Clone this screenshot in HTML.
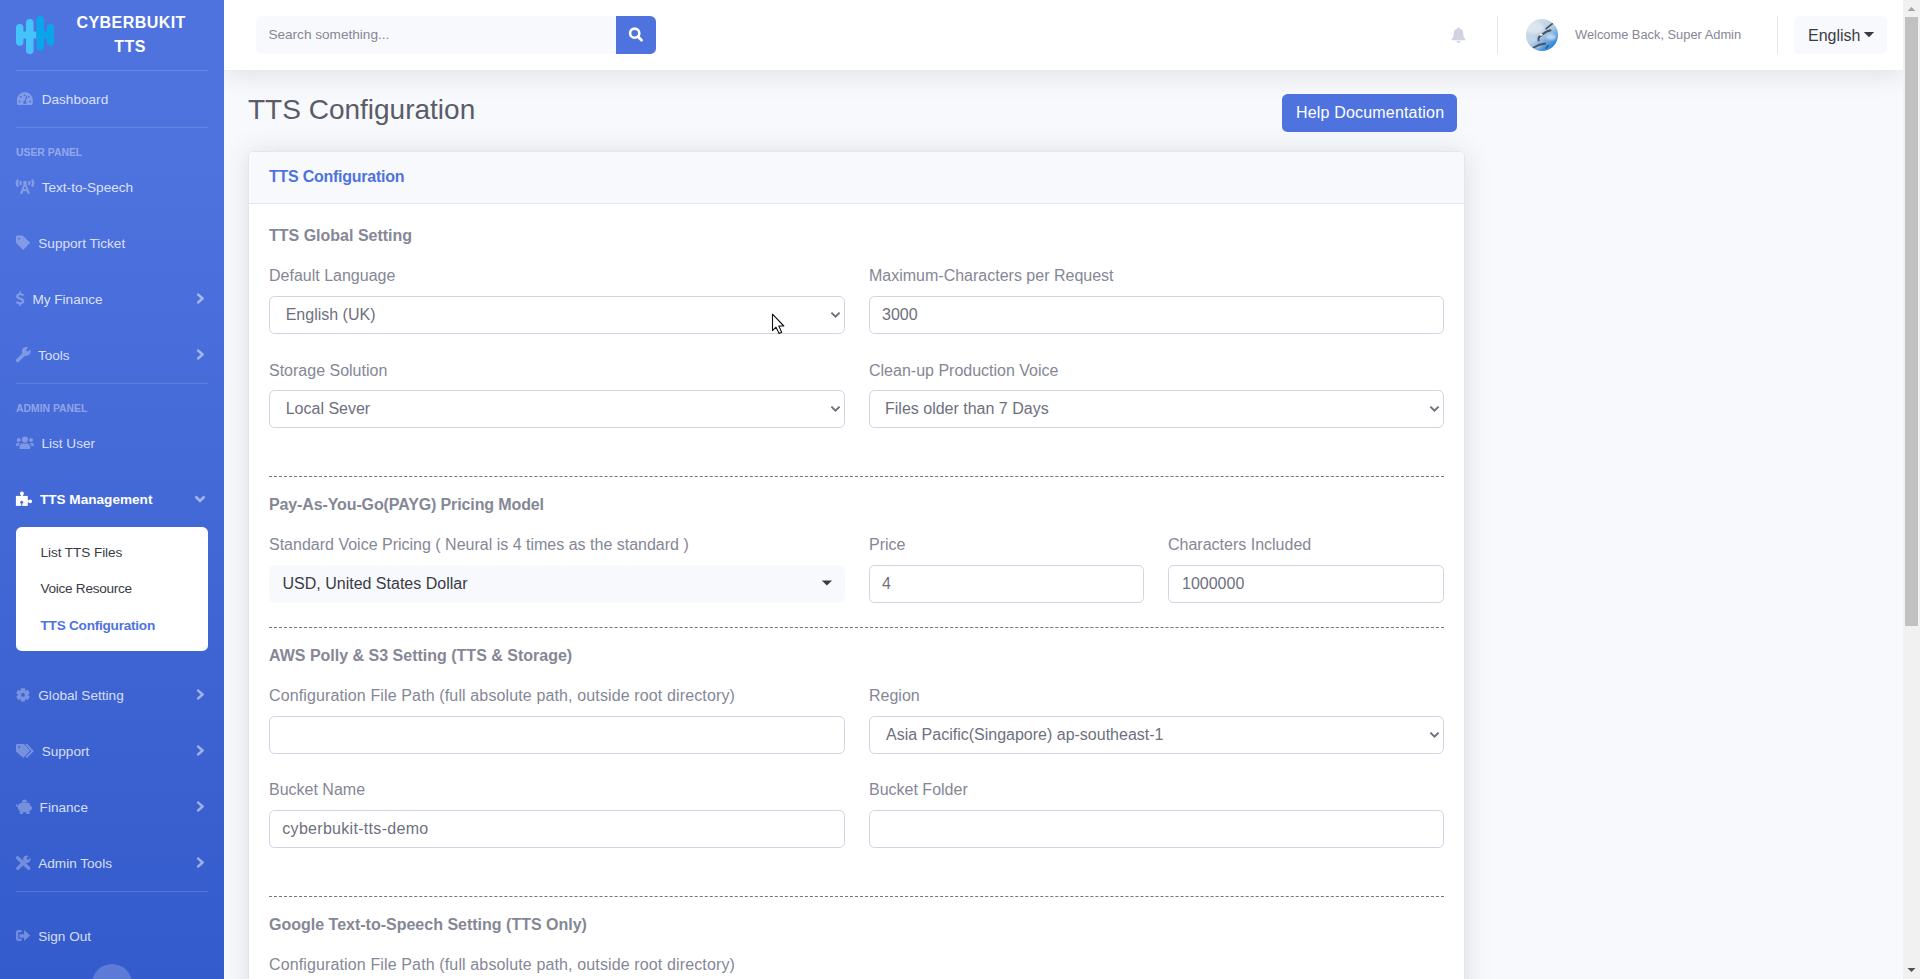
<!DOCTYPE html>
<html>
<head>
<meta charset="utf-8">
<style>
html,body{margin:0;padding:0;width:1920px;height:979px;overflow:hidden;background:#f8f9fc;font-family:"Liberation Sans",sans-serif;}
.a{position:absolute;white-space:nowrap;line-height:20px;}
#sb{position:absolute;z-index:5;left:0;top:0;width:224px;height:979px;overflow:hidden;background:#4e73df;background-image:linear-gradient(180deg,#4e73df 10%,#224abe 100%);background-size:224px 1560px;background-repeat:no-repeat;}
.hr{position:absolute;left:16px;width:192px;height:1px;background:rgba(255,255,255,.15);}
.nl{font-size:13.6px;color:rgba(255,255,255,.8);}
.sh{font-size:10.4px;font-weight:700;color:rgba(255,255,255,.4);letter-spacing:0;}
.ic{position:absolute;fill:rgba(255,255,255,.3);}
.chev{position:absolute;left:196px;width:9px;height:11px;}
#tb{position:absolute;left:224px;top:0;width:1679px;height:70px;background:#fff;box-shadow:0 .15rem 1.75rem 0 rgba(58,59,69,.15);}
.lbl{font-size:16px;color:#858796;}
.sec{font-size:16px;font-weight:700;color:#858796;}
.fc{position:absolute;box-sizing:border-box;height:38px;border:1px solid #d1d3e2;border-radius:5.6px;background:#fff;}
.val{font-size:16px;color:#6e707e;}
.dash{position:absolute;left:269px;width:1175px;height:0;border-top:1px dashed #777;}
.sel svg{position:absolute;right:5px;top:15px;}
</style>
</head>
<body>
<!-- SIDEBAR -->
<div id="sb">
<svg style="position:absolute;left:16px;top:16px" width="40" height="40" viewBox="0 0 40 40">
<g fill="#45c4fb"><rect x="0" y="8" width="7.4" height="21.8" rx="3.7"/><rect x="10" y="3" width="7.6" height="35" rx="3.8"/><rect x="6" y="15.5" width="6" height="7"/><rect x="16" y="15.5" width="4.5" height="7"/></g>
<g fill="#0aa5ea"><rect x="20.4" y="0" width="7.6" height="34.7" rx="3.8"/><rect x="30.7" y="8" width="7.4" height="21.8" rx="3.7"/><rect x="20.4" y="15.5" width="0" height="7"/><rect x="27" y="15.5" width="5" height="7"/></g>
</svg>
<div class="a " style="left:76.4px;top:13.45px;font-size:16px;font-weight:700;color:#fff;letter-spacing:0.45px">CYBERBUKIT</div>
<div class="a " style="left:114.3px;top:37.15px;font-size:16px;font-weight:700;color:#fff;letter-spacing:0.45px">TTS</div>
<div class="hr" style="top:70px"></div>
<div class="hr" style="top:127px"></div>
<div class="hr" style="top:383px"></div>
<div class="hr" style="top:891px"></div>
<div class="a nl" style="left:41.7px;top:90.28px;font-size:13.6px;">Dashboard</div>
<div class="a nl" style="left:41.7px;top:178.28px;font-size:13.6px;">Text-to-Speech</div>
<div class="a nl" style="left:38.3px;top:234.28px;font-size:13.6px;">Support Ticket</div>
<div class="a nl" style="left:32.4px;top:290.48px;font-size:13.6px;">My Finance</div>
<div class="a nl" style="left:37.9px;top:346.28px;font-size:13.6px;">Tools</div>
<div class="a nl" style="left:41.4px;top:434.28px;font-size:13.6px;">List User</div>
<div class="a nl" style="left:39.9px;top:490.28px;font-size:13.6px;font-weight:700;color:#fff">TTS Management</div>
<div class="a nl" style="left:38.3px;top:686.28px;font-size:13.6px;">Global Setting</div>
<div class="a nl" style="left:41.7px;top:742.28px;font-size:13.6px;">Support</div>
<div class="a nl" style="left:39.6px;top:798.28px;font-size:13.6px;">Finance</div>
<div class="a nl" style="left:38.2px;top:854.28px;font-size:13.6px;">Admin Tools</div>
<div class="a nl" style="left:38.2px;top:927.48px;font-size:13.6px;">Sign Out</div>
<div class="a sh" style="left:16px;top:142.69px;font-size:10.4px;">USER PANEL</div>
<div class="a sh" style="left:16px;top:398.99px;font-size:10.4px;">ADMIN PANEL</div>
<div style="position:absolute;left:16px;top:527px;width:192px;height:124px;background:#fff;border-radius:5.6px"></div>
<div class="a " style="left:40.5px;top:543.48px;font-size:13.6px;color:#3a3b45;letter-spacing:-0.08px">List TTS Files</div>
<div class="a " style="left:40.5px;top:579.48px;font-size:13.6px;color:#3a3b45;letter-spacing:-0.28px">Voice Resource</div>
<div class="a " style="left:40.5px;top:615.68px;font-size:13.6px;color:#4e73df;font-weight:700;letter-spacing:-0.24px">TTS Configuration</div>
<svg class="chev" style="top:293.0px" viewBox="0 0 9 11"><path d="M2.2 1.6 L6.6 5.5 L2.2 9.4" fill="none" stroke="rgba(255,255,255,.5)" stroke-width="2.6" stroke-linecap="round" stroke-linejoin="round"/></svg>
<svg class="chev" style="top:348.8px" viewBox="0 0 9 11"><path d="M2.2 1.6 L6.6 5.5 L2.2 9.4" fill="none" stroke="rgba(255,255,255,.5)" stroke-width="2.6" stroke-linecap="round" stroke-linejoin="round"/></svg>
<svg class="chev" style="top:688.8px" viewBox="0 0 9 11"><path d="M2.2 1.6 L6.6 5.5 L2.2 9.4" fill="none" stroke="rgba(255,255,255,.5)" stroke-width="2.6" stroke-linecap="round" stroke-linejoin="round"/></svg>
<svg class="chev" style="top:744.8px" viewBox="0 0 9 11"><path d="M2.2 1.6 L6.6 5.5 L2.2 9.4" fill="none" stroke="rgba(255,255,255,.5)" stroke-width="2.6" stroke-linecap="round" stroke-linejoin="round"/></svg>
<svg class="chev" style="top:800.8px" viewBox="0 0 9 11"><path d="M2.2 1.6 L6.6 5.5 L2.2 9.4" fill="none" stroke="rgba(255,255,255,.5)" stroke-width="2.6" stroke-linecap="round" stroke-linejoin="round"/></svg>
<svg class="chev" style="top:856.8px" viewBox="0 0 9 11"><path d="M2.2 1.6 L6.6 5.5 L2.2 9.4" fill="none" stroke="rgba(255,255,255,.5)" stroke-width="2.6" stroke-linecap="round" stroke-linejoin="round"/></svg>
<svg style="position:absolute;left:194px;top:494px" width="12" height="10" viewBox="0 0 12 10"><path d="M1.5 2.5 L6 7 L10.5 2.5" fill="none" stroke="rgba(255,255,255,.5)" stroke-width="2.6"/></svg>
<div style="position:absolute;left:92px;top:964px;width:40px;height:40px;border-radius:50%;background:rgba(255,255,255,.2)"></div>
<svg style="position:absolute;left:0;top:0" width="224" height="979" viewBox="0 0 224 979"><g fill="#fff" stroke="none" opacity=".3">
<path fill-rule="evenodd" d="M17.6,105 C16.6,103 16.9,101 16.9,100.1 A7.95,7.95 0 0 1 32.8,100.1 C32.8,101 33.1,103 32.1,105 Z M19.80,97.10 a1,1 0 1,0 2,0 a1,1 0 1,0 -2,0 M23.50,95.30 a1,1 0 1,0 2,0 a1,1 0 1,0 -2,0 M27.70,97.10 a1,1 0 1,0 2,0 a1,1 0 1,0 -2,0 M18.60,101.50 a1,1 0 1,0 2,0 a1,1 0 1,0 -2,0 M29.20,101.50 a1,1 0 1,0 2,0 a1,1 0 1,0 -2,0 M23.20,102.40 a1.7,1.7 0 1,0 3.4,0 a1.7,1.7 0 1,0 -3.4,0 "/>
<path d="M24.3,102 L26.2,95.6 L27.3,95.9 L25.6,102.4 Z" fill="#4e73df"/>
<g fill="none" stroke="#fff" stroke-width="2.3" stroke-linecap="round"><path d="M17.6,180.4 Q16,183.1 17.6,185.8"/><path d="M32.4,180.4 Q34,183.1 32.4,185.8"/><path d="M20.6,182 Q19.8,183 20.6,184"/><path d="M29.2,182 Q30,183 29.2,184"/></g>
<path d="M25,180.8 C26.2,180.8 26.9,181.6 26.9,182.7 C26.9,183.3 26.7,183.8 26.3,184.1 L30,193.8 L27.6,193.8 L26.8,191.2 L23.2,191.2 L22.4,193.8 L20,193.8 L23.7,184.1 C23.3,183.8 23.1,183.3 23.1,182.7 C23.1,181.6 23.8,180.8 25,180.8 Z M23.8,189.2 L26.2,189.2 L25,185.6 Z"/>
<path fill-rule="evenodd" d="M16,236.8 Q16,235.5 17.3,235.5 L22.6,235.5 L30.1,242.8 L23.2,250 L16,242.8 Z M18.30,238.80 a0.9,0.9 0 1,0 1.8,0 a0.9,0.9 0 1,0 -1.8,0 "/>
<path d="M19.3,291.4 L21,291.4 L21,293.2 C22.3,293.3 23.4,293.8 24.2,294.4 L23.2,296.1 C22.3,295.5 21.3,295.2 20.2,295.2 C19,295.2 18.5,295.6 18.5,296.2 C18.5,296.9 19.3,297.1 20.9,297.7 C23.1,298.4 24.3,299.3 24.3,301.2 C24.3,302.9 23,304 21,304.2 L21,305.9 L19.3,305.9 L19.3,304.2 C17.9,304.1 16.6,303.6 15.9,302.9 L16.9,301.2 C17.8,301.9 19,302.3 20.1,302.3 C21.3,302.3 21.9,301.9 21.9,301.2 C21.9,300.5 21.2,300.2 19.5,299.6 C17.4,298.9 16.1,298.1 16.1,296.3 C16.1,294.6 17.4,293.4 19.3,293.2 Z"/>
<path d="M17.6,360.4 L24.6,353.4" stroke="#fff" stroke-width="3.6" stroke-linecap="round" fill="none"/>
<path d="M26.2,347.1 C27,347.1 27.8,347.3 28.3,347.6 L25.9,350.1 L27.6,351.8 L30.2,349.4 C30.5,350 30.6,350.6 30.6,351.4 C30.6,353.8 28.6,355.8 26.2,355.8 C25.4,355.8 24.6,355.6 24,355.2 L22.6,353.8 C22.2,353.2 21.9,352.4 21.9,351.5 C21.9,349.1 23.8,347.1 26.2,347.1 Z"/>
<path d="M21.80,439.60 a3.1,3.1 0 1,0 6.2,0 a3.1,3.1 0 1,0 -6.2,0 M16.70,440.10 a2,2 0 1,0 4,0 a2,2 0 1,0 -4,0 M29.00,440.10 a2,2 0 1,0 4,0 a2,2 0 1,0 -4,0 "/>
<path d="M19.4,448.9 L19.4,446.6 C19.4,444.8 20.6,443.4 22.3,443.4 L27.3,443.4 C29,443.4 30.2,444.8 30.2,446.6 L30.2,448.9 Z"/>
<path d="M16,446 L16,444.6 C16,443.7 16.6,442.9 17.6,442.9 L20.2,442.9 C19.2,443.8 18.6,444.8 18.5,446 Z M33.8,446 L33.8,444.6 C33.8,443.7 33.2,442.9 32.2,442.9 L29.6,442.9 C30.6,443.8 31.2,444.8 31.3,446 Z"/>
<path fill-rule="evenodd" d="M20.66,690.82 L20.93,688.21 L25.07,688.21 L25.34,690.82 L25.36,690.84 L27.76,689.76 L29.83,693.35 L27.70,694.88 L27.70,694.92 L29.83,696.45 L27.76,700.04 L25.36,698.96 L25.34,698.98 L25.07,701.59 L20.93,701.59 L20.66,698.98 L20.64,698.96 L18.24,700.04 L16.17,696.45 L18.30,694.92 L18.30,694.88 L16.17,693.35 L18.24,689.76 L20.64,690.84 Z M21.10,694.90 a1.9,1.9 0 1,0 3.8,0 a1.9,1.9 0 1,0 -3.8,0 "/>
<path fill-rule="evenodd" d="M16,745 Q16,743.9 17.1,743.9 L24,743.9 L30.1,750.6 L23.3,757.9 L16,751.5 Z M18.30,747.00 a0.9,0.9 0 1,0 1.8,0 a0.9,0.9 0 1,0 -1.8,0 "/>
<path d="M26,744.2 L32.6,750.9 L26.2,757.3" fill="none" stroke="#fff" stroke-width="1.9"/>
<path d="M21.8,802.3 C21.8,800.5 23,799.4 24.5,799.4 C26,799.4 27.2,800.5 27.2,802.3 Z"/>
<path d="M19.6,803.6 C20.9,802.8 22.6,802.4 24.4,802.4 C25.8,802.4 27.2,802.6 28.4,803.1 L29.6,802.4 L29.6,804.5 C30.4,805.2 31,806 31.3,806.8 L32.1,806.8 L32.1,809.6 L31,809.6 C30.6,810.3 30,810.9 29.6,811.2 L29.6,813.9 L26.3,813.9 L26.3,812.3 L23,812.3 L23,813.9 L19.8,813.9 L19.8,811.2 C18.3,810 17.8,808.6 17.8,807.1 C17.4,807.1 16.3,806.6 15.9,805.4 C15.7,804.6 16.2,803.9 17,803.9 L17,805 C17,805.5 17.4,805.7 17.9,805.6 C18.2,804.8 18.8,804.1 19.6,803.6 Z"/>
<path d="M17.5,857.8 L28.8,868.2" stroke="#fff" stroke-width="3.4" stroke-linecap="round" fill="none"/>
<path d="M17.8,868.4 L23.6,862.6" stroke="#fff" stroke-width="3.4" stroke-linecap="round" fill="none"/>
<path d="M26.6,855.6 C27.3,855.6 28,855.8 28.5,856.1 L26.4,858.3 L28,859.9 L30.2,857.7 C30.4,858.2 30.5,858.7 30.5,859.3 C30.5,861.3 28.8,863 26.8,863 C26.1,863 25.5,862.8 25,862.5 L23.6,861.1 C23.3,860.6 23.1,860 23.1,859.3 C23.1,857.3 24.6,855.6 26.6,855.6 Z"/>
<path d="M21.6,931.2 L18.6,931.2 C17.6,931.2 17.1,931.8 17.1,932.6 L17.1,938.4 C17.1,939.2 17.6,939.8 18.6,939.8 L21.6,939.8" fill="none" stroke="#fff" stroke-width="2.2"/>
<path d="M19.4,934.3 L24.1,934.3 L24.1,929.9 L30.1,935.4 L24.1,940.9 L24.1,937.7 L19.4,937.7 Z"/>
</g>
<g fill="#fff"><rect x="15.9" y="495.9" width="11.9" height="10"/><path d="M19.90,493.60 a2,2 0 1,0 4,0 a2,2 0 1,0 -4,0 M28.30,501.30 a1.9,1.9 0 1,0 3.8,0 a1.9,1.9 0 1,0 -3.8,0 "/><rect x="21" y="494.5" width="1.8" height="2"/><rect x="27" y="500.4" width="2" height="1.8"/></g><path fill="#4e73df" d="M20.20,502.30 a1.5,1.5 0 1,0 3.0,0 a1.5,1.5 0 1,0 -3.0,0 "/><rect x="21.2" y="502.5" width="1" height="3.5" fill="#4e73df"/>
</svg>

</div>
<!-- TOPBAR -->
<div id="tb"></div>
<div id="tbc" style="position:absolute;left:0;top:0;z-index:6">
<div style="position:absolute;left:256px;top:16px;width:360px;height:38px;background:#f8f9fc;border-radius:5.6px 0 0 5.6px"></div>
<div class="a " style="left:268.4px;top:25.18px;font-size:13.6px;color:#858796">Search something...</div>
<div style="position:absolute;left:616px;top:16px;width:40px;height:38px;background:#4e73df;border-radius:0 5.6px 5.6px 0"></div>
<svg style="position:absolute;left:626px;top:25px" width="20" height="20" viewBox="0 0 20 20"><circle cx="8.7" cy="8.2" r="4.6" fill="none" stroke="#fff" stroke-width="2.6"/><path d="M11.8 11.4 L15.6 15.2" stroke="#fff" stroke-width="2.8" stroke-linecap="round"/></svg>
<svg style="position:absolute;left:1451px;top:27px" width="15" height="16" viewBox="0 0 15 16"><path d="M7.5 0.5 C8.3 0.5 8.6 1 8.6 1.6 C11 2.1 12.3 4 12.3 6.5 C12.3 9.6 12.8 11 14.6 12.5 L14.6 13.2 L0.4 13.2 L0.4 12.5 C2.2 11 2.7 9.6 2.7 6.5 C2.7 4 4 2.1 6.4 1.6 C6.4 1 6.7 0.5 7.5 0.5 Z M5.6 14 L9.4 14 C9.4 15 8.6 15.8 7.5 15.8 C6.4 15.8 5.6 15 5.6 14 Z" fill="#d1d3e2"/></svg>
<div style="position:absolute;left:1497px;top:16px;width:1px;height:38px;background:#e3e6f0"></div>
<svg style="position:absolute;left:1526px;top:19px" width="32" height="32" viewBox="0 0 32 32"><defs><clipPath id="avc"><circle cx="16" cy="16" r="16"/></clipPath><linearGradient id="avg" x1="0.2" y1="0.1" x2="0.85" y2="0.95"><stop offset="0" stop-color="#d3dfeb"/><stop offset="0.45" stop-color="#b7cde6"/><stop offset="0.75" stop-color="#5c9fe0"/><stop offset="1" stop-color="#0f78d4"/></linearGradient><filter id="avb" x="-50%" y="-50%" width="200%" height="200%"><feGaussianBlur stdDeviation="1.2"/></filter><filter id="avs" x="-20%" y="-20%" width="140%" height="140%"><feGaussianBlur stdDeviation=".35"/></filter></defs>
<g clip-path="url(#avc)"><rect width="32" height="32" fill="url(#avg)"/>
<g filter="url(#avb)" opacity=".75"><ellipse cx="9" cy="9" rx="9" ry="6" fill="#e2eaf2"/><ellipse cx="6" cy="20" rx="5" ry="4" fill="#c6d8ec"/><ellipse cx="25" cy="18" rx="5" ry="3" fill="#d6e4f2"/><ellipse cx="10" cy="27" rx="6" ry="2.5" fill="#a9c9ea"/></g>
<g fill="none" stroke="#4b535b" stroke-linecap="round" filter="url(#avs)"><path d="M12.6,21.3 C12.2,18.8 13.3,17 15.3,16.2" stroke-width="2"/><path d="M15.6,16 C18,14.2 20,12 24.4,11.4" stroke-width="2.2"/><path d="M20.2,9.6 C22,8.2 24.2,6.4 26.4,4.6" stroke-width="1.8"/><path d="M7.6,28.4 C10.5,26.6 14.5,25.2 19.2,24.5" stroke-width="1.8"/><path d="M19.9,29.2 C20.8,28.3 21.5,27.3 22,26.4" stroke-width="1.4"/></g>
<ellipse cx="15" cy="15.8" rx="2" ry="1" fill="#eef1f2"/><circle cx="12.6" cy="15.2" r=".6" fill="#d9c27a"/><circle cx="18.3" cy="20.2" r=".6" fill="#c9b070"/></g></svg>
<div class="a " style="left:1575px;top:25.44px;font-size:12.85px;color:#858796">Welcome Back, Super Admin</div>
<div style="position:absolute;left:1777px;top:16px;width:1px;height:38px;background:#e3e6f0"></div>
<div style="position:absolute;left:1794px;top:16px;width:93px;height:38px;background:#f8f9fc;border-radius:5.6px"></div>
<div class="a " style="left:1808px;top:25.55px;font-size:16px;color:#3a3b45">English</div>
<svg style="position:absolute;left:1863px;top:31px" width="12" height="7" viewBox="0 0 12 7"><path d="M0.8 1 L11.2 1 L6 6.2 Z" fill="#3a3b45"/></svg>
</div>
<!-- CONTENT -->
<div id="ct">
<div class="a " style="left:248px;top:100.39px;font-size:28px;color:#5a5c69">TTS Configuration</div>
<div style="position:absolute;left:1282px;top:94px;width:175px;height:38px;background:#4e73df;border-radius:5.6px"></div>
<div class="a " style="left:1296px;top:103.35px;font-size:16px;color:#fff;letter-spacing:0.18px">Help Documentation</div>
<div style="position:absolute;left:248px;top:151px;width:1217px;height:900px;box-sizing:border-box;background:#fff;border:1px solid #e3e6f0;border-radius:5.6px;box-shadow:0 .15rem 1.75rem 0 rgba(58,59,69,.15);overflow:hidden"><div style="position:absolute;left:0;top:0;width:100%;height:51px;background:#f8f9fc;border-bottom:1px solid #e3e6f0"></div></div>
<div class="a " style="left:269px;top:167.45px;font-size:16px;color:#4e73df;font-weight:700;letter-spacing:-0.25px">TTS Configuration</div>
<div class="a sec" style="left:269px;top:226.45px;font-size:16px;">TTS Global Setting</div>
<div class="a sec" style="left:269px;top:495.45px;font-size:16px;letter-spacing:-0.12px">Pay-As-You-Go(PAYG) Pricing Model</div>
<div class="a sec" style="left:269px;top:646.45px;font-size:16px;">AWS Polly &amp; S3 Setting (TTS &amp; Storage)</div>
<div class="a sec" style="left:269px;top:915.45px;font-size:16px;">Google Text-to-Speech Setting (TTS Only)</div>
<div class="a lbl" style="left:269px;top:266.45px;font-size:16px;">Default Language</div>
<div class="a lbl" style="left:869px;top:266.45px;font-size:16px;">Maximum-Characters per Request</div>
<div class="a lbl" style="left:269px;top:360.95px;font-size:16px;">Storage Solution</div>
<div class="a lbl" style="left:869px;top:360.95px;font-size:16px;">Clean-up Production Voice</div>
<div class="a lbl" style="left:269px;top:535.45px;font-size:16px;">Standard Voice Pricing ( Neural is 4 times as the standard )</div>
<div class="a lbl" style="left:869px;top:535.45px;font-size:16px;">Price</div>
<div class="a lbl" style="left:1168px;top:535.45px;font-size:16px;">Characters Included</div>
<div class="a lbl" style="left:269px;top:686.45px;font-size:16px;letter-spacing:0.13px">Configuration File Path (full absolute path, outside root directory)</div>
<div class="a lbl" style="left:869px;top:686.45px;font-size:16px;">Region</div>
<div class="a lbl" style="left:269px;top:779.95px;font-size:16px;">Bucket Name</div>
<div class="a lbl" style="left:869px;top:779.95px;font-size:16px;">Bucket Folder</div>
<div class="a lbl" style="left:269px;top:955.45px;font-size:16px;letter-spacing:0.13px">Configuration File Path (full absolute path, outside root directory)</div>
<div class="fc" style="left:269px;top:296px;width:576px"></div>
<svg style="position:absolute;left:830px;top:311px" width="11" height="8" viewBox="0 0 11 8"><path d="M1.4 1.6 L5.5 5.7 L9.6 1.6" fill="none" stroke="#6e707e" stroke-width="2"/></svg>
<div class="a val" style="left:285.7px;top:305.45px;font-size:16px;">English (UK)</div>
<div class="fc" style="left:869px;top:296px;width:575px"></div>
<div class="a val" style="left:882px;top:305.45px;font-size:16px;">3000</div>
<div class="fc" style="left:269px;top:390px;width:576px"></div>
<svg style="position:absolute;left:830px;top:405px" width="11" height="8" viewBox="0 0 11 8"><path d="M1.4 1.6 L5.5 5.7 L9.6 1.6" fill="none" stroke="#6e707e" stroke-width="2"/></svg>
<div class="a val" style="left:285.7px;top:399.45px;font-size:16px;">Local Sever</div>
<div class="fc" style="left:869px;top:390px;width:575px"></div>
<svg style="position:absolute;left:1429px;top:405px" width="11" height="8" viewBox="0 0 11 8"><path d="M1.4 1.6 L5.5 5.7 L9.6 1.6" fill="none" stroke="#6e707e" stroke-width="2"/></svg>
<div class="a val" style="left:885px;top:399.45px;font-size:16px;">Files older than 7 Days</div>
<div style="position:absolute;left:269px;top:565px;width:576px;height:38px;background:#f8f9fc;border-radius:5.6px"></div>
<div class="a " style="left:282.5px;top:574.45px;font-size:16px;color:#3a3b45">USD, United States Dollar</div>
<svg style="position:absolute;left:821px;top:580px" width="12" height="6" viewBox="0 0 12 6"><path d="M0.8 0.6 L11 0.6 L5.9 5.4 Z" fill="#3a3b45"/></svg>
<div class="fc" style="left:869px;top:565px;width:275px"></div>
<div class="a val" style="left:882px;top:574.45px;font-size:16px;">4</div>
<div class="fc" style="left:1168px;top:565px;width:276px"></div>
<div class="a val" style="left:1182px;top:574.45px;font-size:16px;">1000000</div>
<div class="fc" style="left:269px;top:716px;width:576px"></div>
<div class="fc" style="left:869px;top:716px;width:575px"></div>
<svg style="position:absolute;left:1429px;top:731px" width="11" height="8" viewBox="0 0 11 8"><path d="M1.4 1.6 L5.5 5.7 L9.6 1.6" fill="none" stroke="#6e707e" stroke-width="2"/></svg>
<div class="a val" style="left:886px;top:725.45px;font-size:16px;">Asia Pacific(Singapore) ap-southeast-1</div>
<div class="fc" style="left:269px;top:810px;width:576px"></div>
<div class="a val" style="left:282.3px;top:819.45px;font-size:16px;letter-spacing:0.3px">cyberbukit-tts-demo</div>
<div class="fc" style="left:869px;top:810px;width:575px"></div>
<div class="dash" style="top:476px"></div>
<div class="dash" style="top:627px"></div>
<div class="dash" style="top:896px"></div>
<svg style="position:absolute;left:771px;top:313px;z-index:9" width="16" height="22" viewBox="0 0 16 22"><path d="M1.5 1.2 L1.5 17.6 L5 14.2 L8.1 20.4 L10.7 19.2 L7.8 13 L12.8 13 Z" fill="#fff" stroke="#111" stroke-width="1.1" stroke-linejoin="round"/></svg>
</div>
<!-- SCROLLBAR -->
<div id="scr" style="position:absolute;left:1903px;top:0;width:17px;height:979px;background:#f1f1f1;">
  <div style="position:absolute;left:2px;top:17px;width:13px;height:609px;background:#c1c1c1;"></div>
  <svg style="position:absolute;left:0;top:0" width="17" height="17"><path d="M4.5 11 L8.5 7 L12.5 11 Z" fill="#a3a3a3"/></svg>
  <svg style="position:absolute;left:0;top:962px" width="17" height="17"><path d="M4.5 6 L8.5 10 L12.5 6 Z" fill="#505050"/></svg>
</div>
</body>
</html>
